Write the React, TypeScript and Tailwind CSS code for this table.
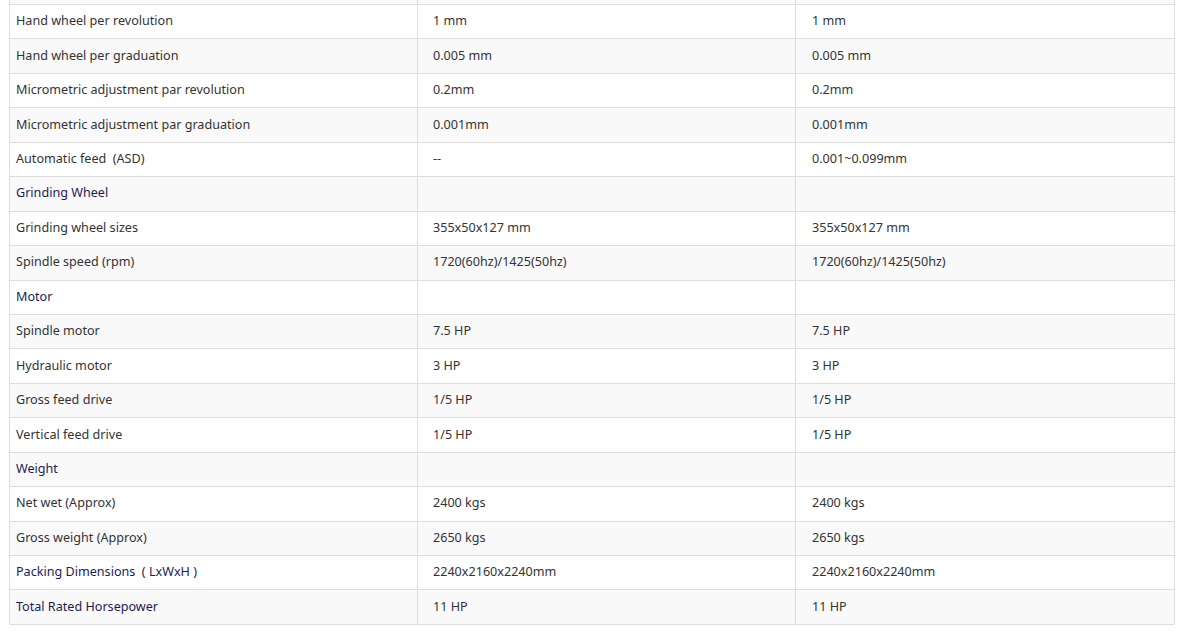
import React from "react";

type Row = { label: string; a: string; b: string; head?: boolean };

const rows: Row[] = [
  { label: "Hand wheel per revolution", a: "1 mm", b: "1 mm" },
  { label: "Hand wheel per graduation", a: "0.005 mm", b: "0.005 mm" },
  { label: "Micrometric adjustment par revolution", a: "0.2mm", b: "0.2mm" },
  { label: "Micrometric adjustment par graduation", a: "0.001mm", b: "0.001mm" },
  { label: "Automatic feed  (ASD)", a: "--", b: "0.001~0.099mm" },
  { label: "Grinding Wheel", a: "", b: "", head: true },
  { label: "Grinding wheel sizes", a: "355x50x127 mm", b: "355x50x127 mm" },
  { label: "Spindle speed (rpm)", a: "1720(60hz)/1425(50hz)", b: "1720(60hz)/1425(50hz)" },
  { label: "Motor", a: "", b: "", head: true },
  { label: "Spindle motor", a: "7.5 HP", b: "7.5 HP" },
  { label: "Hydraulic motor", a: "3 HP", b: "3 HP" },
  { label: "Gross feed drive", a: "1/5 HP", b: "1/5 HP" },
  { label: "Vertical feed drive", a: "1/5 HP", b: "1/5 HP" },
  { label: "Weight", a: "", b: "", head: true },
  { label: "Net wet (Approx)", a: "2400 kgs", b: "2400 kgs" },
  { label: "Gross weight (Approx)", a: "2650 kgs", b: "2650 kgs" },
  { label: "Packing Dimensions  ( LxWxH )", a: "2240x2160x2240mm", b: "2240x2160x2240mm", head: true },
  { label: "Total Rated Horsepower", a: "11 HP", b: "11 HP", head: true },
];

export default function App() {
  return (
    <div
      className="w-[1183px] h-[633px] bg-white overflow-hidden pl-[9px] pr-[8px]"
      style={{ fontFamily: '"Noto Sans", "Open Sans", sans-serif' }}
    >
      <div className="border-x border-b border-[#dddddd] text-[12.6px] text-[#333333]">
        <div className="grid grid-cols-[408px_378px_1fr] h-[4px] bg-[#f9f9f9]">
          <div className="border-r border-[#dddddd]" />
          <div className="border-r border-[#dddddd]" />
          <div />
        </div>
        {rows.map((r, i) => (
          <div
            key={i}
            className={`grid grid-cols-[408px_378px_1fr] h-[34.44px] border-t border-[#dddddd] ${
              i % 2 === 1 ? "bg-[#f9f9f9]" : "bg-white"
            }`}
          >
            <div
              className={`flex items-center pl-[6px] border-r border-[#dddddd] whitespace-pre ${
                r.head ? "text-[#1c1c52]" : ""
              }`}
            >
              {r.label}
            </div>
            <div className="flex items-center pl-[15px] border-r border-[#dddddd] whitespace-pre">
              {r.a}
            </div>
            <div className="flex items-center pl-[16px] whitespace-pre">{r.b}</div>
          </div>
        ))}
      </div>
    </div>
  );
}
